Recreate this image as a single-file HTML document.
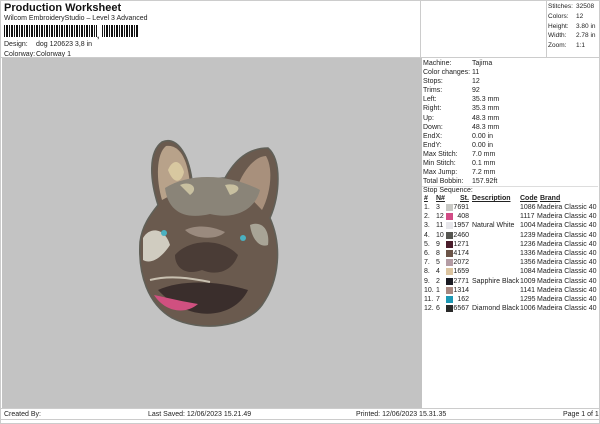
<!DOCTYPE html>
<html><head><meta charset="utf-8"><style>
*{margin:0;padding:0;box-sizing:border-box}
body{width:600px;height:424px;background:#fff;font-family:"Liberation Sans",Arial,sans-serif;font-size:7px;color:#222;position:relative;overflow:hidden}
.a{position:absolute;white-space:nowrap}
.sw{display:inline-block;width:7px;height:7px;vertical-align:-1px}
</style></head><body>
<div class="a" style="left:4px;top:2px;font-size:11px;font-weight:bold;color:#111">Production Worksheet</div>
<div class="a" style="left:4px;top:15px">Wilcom EmbroideryStudio – Level 3 Advanced</div>
<div class="a" style="left:4px;top:25px;width:135px;height:12px;background:repeating-linear-gradient(90deg,#111 0 1px,#fff 1px 2px,#111 2px 4px,#fff 4px 5px)"></div>
<div class="a" style="left:97px;top:25px;width:5px;height:12px;background:#fff"></div>
<div class="a" style="left:97px;top:31px;font-size:8px;font-weight:bold">,</div>
<div class="a" style="left:4px;top:41px">Design:</div><div class="a" style="left:36px;top:41px">dog 120623 3,8 in</div>
<div class="a" style="left:4px;top:51px">Colorway:</div><div class="a" style="left:36px;top:51px">Colorway 1</div>
<div class="a" style="left:0;top:0;width:600px;height:424px;border:1px solid #ccc;pointer-events:none"></div>
<div class="a" style="left:420px;top:0;width:1px;height:58px;background:#ccc"></div>
<div class="a" style="left:546px;top:0;width:1px;height:58px;background:#ccc"></div>
<div class="a" style="left:548px;top:2px;line-height:9.8px;font-size:6.5px">Stitches:<br>Colors:<br>Height:<br>Width:<br>Zoom:</div>
<div class="a" style="left:576px;top:2px;line-height:9.8px;font-size:6.5px">32508<br>12<br>3.80 in<br>2.78 in<br>1:1</div>
<div class="a" style="left:2px;top:58px;width:420px;height:350px;background:#c3c3c3"></div>
<div class="a" style="left:0;top:57px;width:600px;height:1px;background:#ccc"></div>
<div class="a" style="left:423px;top:59px;line-height:9.1px">Machine:<br>Color changes:<br>Stops:<br>Trims:<br>Left:<br>Right:<br>Up:<br>Down:<br>EndX:<br>EndY:<br>Max Stitch:<br>Min Stitch:<br>Max Jump:<br>Total Bobbin:</div>
<div class="a" style="left:472px;top:59px;line-height:9.1px">Tajima<br>11<br>12<br>92<br>35.3 mm<br>35.3 mm<br>48.3 mm<br>48.3 mm<br>0.00 in<br>0.00 in<br>7.0 mm<br>0.1 mm<br>7.2 mm<br>157.92ft</div>
<div class="a" style="left:422px;top:186px;width:176px;height:1px;background:#ddd"></div>
<div class="a" style="left:423px;top:187px">Stop Sequence:</div>
<div class="a" style="left:424px;top:195px;font-weight:bold;text-decoration:underline">#</div>
<div class="a" style="left:436px;top:195px;font-weight:bold;text-decoration:underline">N#</div>
<div class="a" style="left:460px;top:195px;font-weight:bold;text-decoration:underline">St.</div>
<div class="a" style="left:472px;top:195px;font-weight:bold;text-decoration:underline">Description</div>
<div class="a" style="left:520px;top:195px;font-weight:bold;text-decoration:underline">Code</div>
<div class="a" style="left:540px;top:195px;font-weight:bold;text-decoration:underline">Brand</div>
<div class="a" style="left:424px;top:203px;line-height:9.2px">1.<br>2.<br>3.<br>4.<br>5.<br>6.<br>7.<br>8.<br>9.<br>10.<br>11.<br>12.</div>
<div class="a" style="left:436px;top:203px;line-height:9.2px">3<br>12<br>11<br>10<br>9<br>8<br>5<br>4<br>2<br>1<br>7<br>6</div>
<div class="a" style="left:446px;top:204px;line-height:9.2px">
<span class="sw" style="background:#c8c8c4"></span><br><span class="sw" style="background:#d24c86"></span><br><span class="sw" style="background:#e6e6ea"></span><br><span class="sw" style="background:#555550"></span><br><span class="sw" style="background:#4a1c2a"></span><br><span class="sw" style="background:#6c5448"></span><br><span class="sw" style="background:#b49ca4"></span><br><span class="sw" style="background:#dcc4a0"></span><br><span class="sw" style="background:#1c1c24"></span><br><span class="sw" style="background:#a88880"></span><br><span class="sw" style="background:#1c98b4"></span><br><span class="sw" style="background:#2a2a2a"></span></div>
<div class="a" style="left:452px;top:203px;line-height:9.2px;width:17px;text-align:right">7691<br>408<br>1957<br>2460<br>1271<br>4174<br>2072<br>1659<br>2771<br>1314<br>162<br>6567</div>
<div class="a" style="left:472px;top:203px;line-height:9.2px"><br><br>Natural White<br><br><br><br><br><br>Sapphire Black<br><br><br>Diamond Black</div>
<div class="a" style="left:520px;top:203px;line-height:9.2px">1086<br>1117<br>1004<br>1239<br>1236<br>1336<br>1356<br>1084<br>1009<br>1141<br>1295<br>1006</div>
<div class="a" style="left:537px;top:203px;line-height:9.2px">Madeira Classic 40<br>Madeira Classic 40<br>Madeira Classic 40<br>Madeira Classic 40<br>Madeira Classic 40<br>Madeira Classic 40<br>Madeira Classic 40<br>Madeira Classic 40<br>Madeira Classic 40<br>Madeira Classic 40<br>Madeira Classic 40<br>Madeira Classic 40</div>
<svg class="a" style="left:130px;top:130px" width="160" height="200" viewBox="0 0 160 200">
<path d="M28 75 C20 50 18 22 32 12 C46 6 58 22 62 50 L95 48 C105 30 118 18 138 18 C152 30 150 65 140 88 C152 115 150 150 132 175 C115 198 70 202 42 188 C18 174 8 145 10 112 C12 96 20 85 28 75Z" fill="#6a5a4e" stroke="#606058" stroke-width="1.5"/>
<path d="M32 70 C26 50 26 24 36 16 C50 14 58 30 60 55Z" fill="#b8a28a"/>
<path d="M38 40 C42 30 50 28 54 42 C52 52 44 56 38 40Z" fill="#d8c8a0"/>
<path d="M108 55 C116 35 128 26 136 26 C144 40 140 65 132 80Z" fill="#a8907c"/>
<path d="M35 58 C60 42 100 44 130 60 C125 80 105 90 80 84 C55 90 38 82 35 58Z" fill="#8a8478"/>
<path d="M50 55 C60 50 70 58 60 65Z M95 55 C108 52 115 60 100 65Z" fill="#c8c0a0"/>
<path d="M13 108 C20 96 35 98 40 115 C30 130 20 134 13 130Z" fill="#d0ccc0"/>
<path d="M120 95 C132 90 140 100 138 115 C130 118 122 110 120 95Z" fill="#a8a496"/>
<path d="M45 125 C60 108 92 108 108 125 C102 142 86 146 72 140 C56 146 45 138 45 125Z" fill="#4a3c36"/>
<path d="M55 100 C65 95 80 95 95 102 C88 110 65 110 55 100Z" fill="#9a8a7e"/>
<path d="M28 160 C50 150 85 150 118 160 C105 188 60 195 28 160Z" fill="#3a2e2c"/>
<path d="M24 165 C38 168 55 172 68 174 C55 185 35 182 24 165Z" fill="#d05080"/>
<path d="M20 150 C40 145 60 148 80 152" stroke="#c8c0b0" stroke-width="2" fill="none"/>
<circle cx="34" cy="103" r="3" fill="#4ab0c0"/><circle cx="113" cy="108" r="3" fill="#4ab0c0"/>
</svg>
<div class="a" style="left:0;top:408px;width:600px;height:1px;background:#ccc"></div>
<div class="a" style="left:0;top:419px;width:600px;height:1px;background:#ccc"></div>
<div class="a" style="left:4px;top:411px">Created By:</div>
<div class="a" style="left:148px;top:411px">Last Saved: 12/06/2023 15.21.49</div>
<div class="a" style="left:356px;top:411px">Printed: 12/06/2023 15.31.35</div>
<div class="a" style="left:563px;top:411px">Page 1 of 1</div>
</body></html>
